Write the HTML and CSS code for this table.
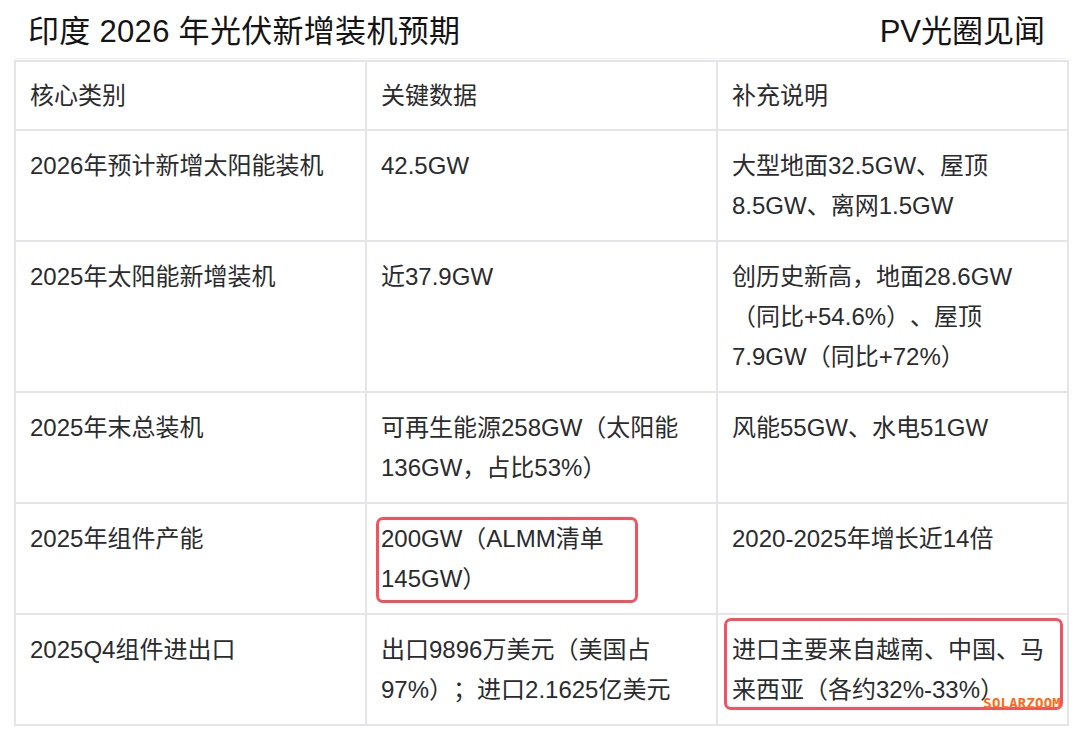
FILE: index.html
```html
<!DOCTYPE html>
<html lang="zh-CN">
<head>
<meta charset="utf-8">
<title>印度2026年光伏新增装机预期</title>
<link rel="stylesheet" href="styles.css">
</head>
<body>
<div class="page">
  <header class="header">
    <h1 class="title">印度 2026 年光伏新增装机预期</h1>
    <div class="brand">PV光圈见闻</div>
  </header>
  <table class="data">
    <thead>
      <tr><th>核心类别</th><th>关键数据</th><th>补充说明</th></tr>
    </thead>
    <tbody>
      <tr><td>2026年预计新增太阳能装机</td><td>42.5GW</td><td>大型地面32.5GW、屋顶<br>8.5GW、离网1.5GW</td></tr>
      <tr><td>2025年太阳能新增装机</td><td>近37.9GW</td><td>创历史新高，地面28.6GW<br>（同比+54.6%）、屋顶<br>7.9GW（同比+72%）</td></tr>
      <tr><td>2025年末总装机</td><td>可再生能源258GW（太阳能<br>136GW，占比53%）</td><td>风能55GW、水电51GW</td></tr>
      <tr><td>2025年组件产能</td><td class="mark-cell"><span class="mark mark-a"></span>200GW（ALMM清单<br>145GW）</td><td>2020-2025年增长近14倍</td></tr>
      <tr><td>2025Q4组件进出口</td><td>出口9896万美元（美国占<br>97%）；进口2.1625亿美元</td><td class="mark-cell"><span class="mark mark-b"></span>进口主要来自越南、中国、马<br>来西亚（各约32%-33%）<span class="watermark">SOLARZOOM</span></td></tr>
    </tbody>
  </table>
</div>
</body>
</html>
```

FILE: styles.css
```css
* { box-sizing: border-box; }
html, body {
  margin: 0;
  padding: 0;
  background: #ffffff;
}
body {
  font-family: "Liberation Sans", "Noto Sans CJK SC", sans-serif;
  color: #2b2b2d;
  width: 1080px;
  height: 737px;
  overflow: hidden;
  text-spacing-trim: space-all;
}
.page {
  display: flex;
  flex-direction: column;
}
.header {
  display: flex;
  justify-content: space-between;
  align-items: center;
  height: 59px;
  margin: 0 14px;
  padding: 0 21px 0 14px;
  border-bottom: 1px solid #f1f1f3;
}
.title {
  margin: 0;
  font-size: 31px;
  font-weight: 400;
  color: #141414;
  line-height: 40px;
  padding-top: 6px;
  letter-spacing: 0.3px;
}
.brand {
  font-size: 31px;
  color: #141414;
  line-height: 40px;
  padding-top: 6px;
}
.data {
  margin: 1px 0 0 14px;
  width: 1055px;
  border-collapse: collapse;
  table-layout: fixed;
  font-size: 24px;
  line-height: 40px;
}
.data th, .data td {
  border: 2px solid #e4e4e9;
  text-align: left;
  vertical-align: top;
  font-weight: 400;
  padding: 15px 4px 14px 14px;
  white-space: nowrap;
}
.data th {
  padding-top: 14px;
  padding-bottom: 13px;
}
.mark-cell {
  position: relative;
}
.mark {
  position: absolute;
  border: 3px solid #f3525f;
  border-radius: 7px;
}
.mark-a {
  left: 9px;
  top: 13px;
  width: 262px;
  height: 86px;
}
.mark-b {
  left: 6px;
  top: 3px;
  width: 339px;
  height: 92px;
}
.watermark {
  position: absolute;
  right: 6px;
  bottom: 15px;
  font-family: "DejaVu Sans Mono", monospace;
  font-size: 14px;
  line-height: 12px;
  font-weight: 700;
  color: #ff6a13;
  letter-spacing: 0.2px;
}
```
